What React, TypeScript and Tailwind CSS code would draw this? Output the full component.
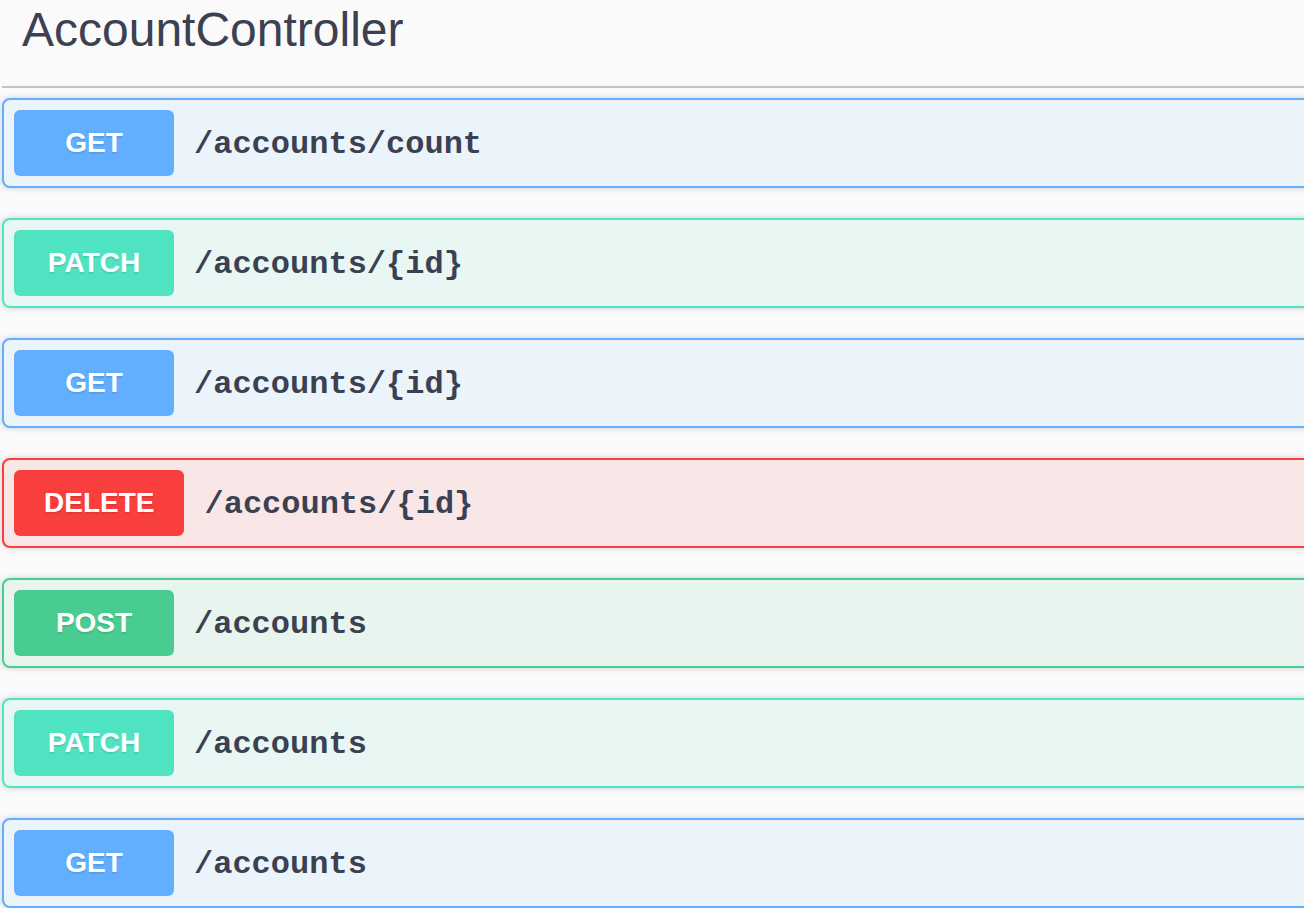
import React from 'react'

type Method = 'GET' | 'PATCH' | 'DELETE' | 'POST'

const styles: Record<Method, { block: string; badge: string }> = {
  GET: { block: 'border-[#61affe] bg-[#ebf3fb]', badge: 'bg-[#61affe]' },
  PATCH: { block: 'border-[#50e3c2] bg-[#e8f7f3]', badge: 'bg-[#50e3c2]' },
  DELETE: { block: 'border-[#f93e3e] bg-[#f9e7e7]', badge: 'bg-[#f93e3e]' },
  POST: { block: 'border-[#49cc90] bg-[#e7f5ee]', badge: 'bg-[#49cc90]' },
}

const ops: { method: Method; path: string }[] = [
  { method: 'GET', path: '/accounts/count' },
  { method: 'PATCH', path: '/accounts/{id}' },
  { method: 'GET', path: '/accounts/{id}' },
  { method: 'DELETE', path: '/accounts/{id}' },
  { method: 'POST', path: '/accounts' },
  { method: 'PATCH', path: '/accounts' },
  { method: 'GET', path: '/accounts' },
]

export default function App() {
  return (
    <div className="min-h-screen w-full overflow-hidden bg-[#fafafa] text-[#3b4151]">
      <div className="w-[1340px] pl-[2px]">
        <h4
          className="border-b-2 border-[#c4c4c8] pl-[20px] pt-[2px] pb-[28px] text-[48px] leading-[56px] font-normal"
          style={{ fontFamily: '"Liberation Sans", Arial, sans-serif' }}
        >
          AccountController
        </h4>
        <div className="mt-[10px] flex flex-col gap-[30px]">
          {ops.map((op, i) => (
            <div
              key={i}
              className={`flex items-center rounded-[8px] border-2 p-[10px] shadow-[0_0_6px_rgba(0,0,0,0.19)] ${styles[op.method].block}`}
            >
              <span
                className={`flex h-[66px] min-w-[160px] items-center justify-center rounded-[6px] px-[30px] text-[28px] font-bold text-white [text-shadow:0_2px_0_rgba(0,0,0,0.1)] ${styles[op.method].badge}`}
                style={{ fontFamily: '"Liberation Sans", Arial, sans-serif' }}
              >
                {op.method}
              </span>
              <span
                className="px-[20px] pt-[4px] text-[32px] font-bold text-[#3b4151]"
                style={{ fontFamily: '"Liberation Mono", "Courier New", monospace' }}
              >
                {op.path}
              </span>
            </div>
          ))}
        </div>
      </div>
    </div>
  )
}
